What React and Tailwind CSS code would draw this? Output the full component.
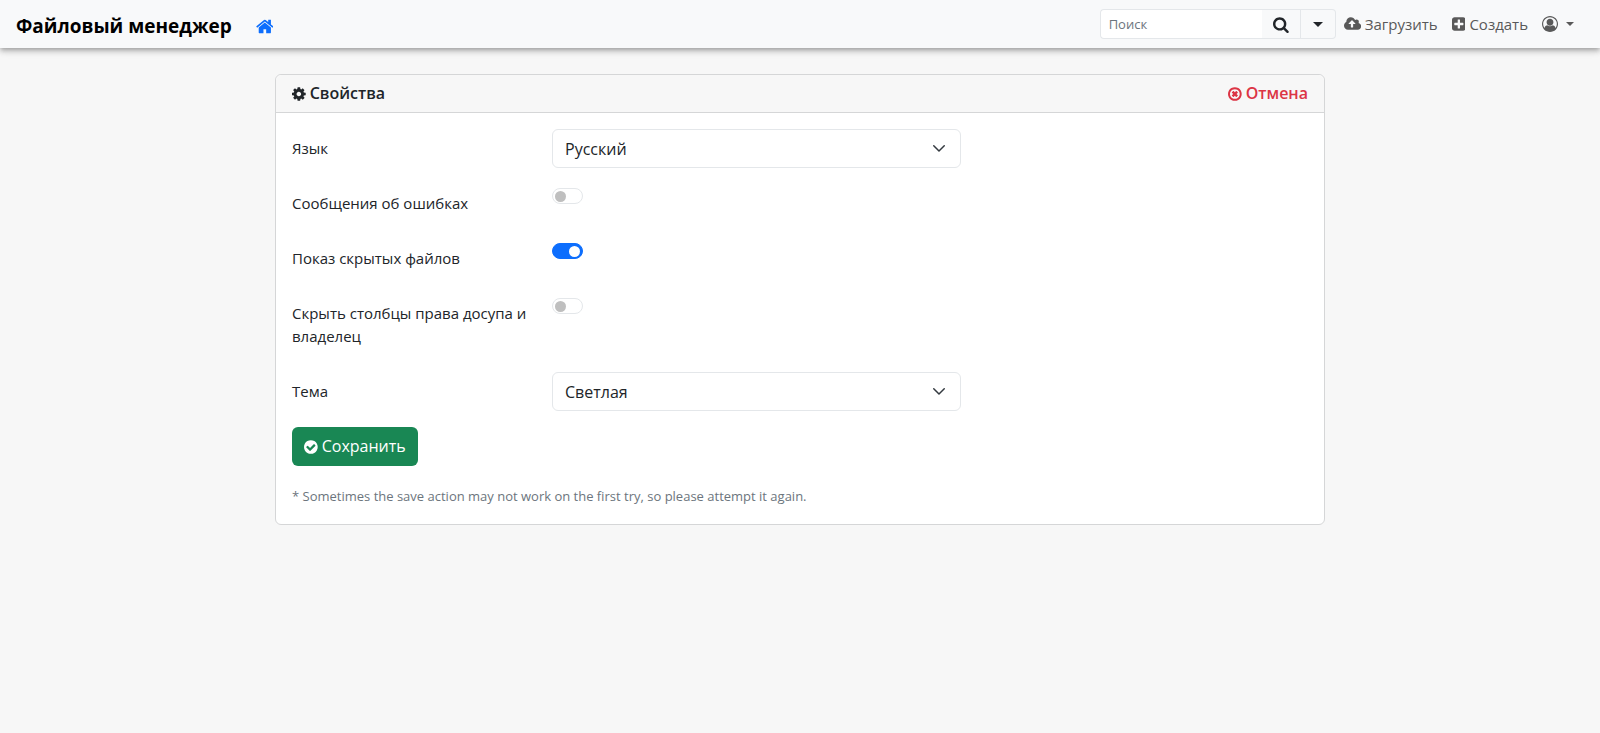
import React, { useState } from 'react';

const icons = {
    home: {
        box: '64 0 1664 1792',
        d: 'M1472 992v480q0 26-19 45t-45 19h-384v-384h-256v384h-384q-26 0-45-19t-19-45v-480q0-1 .5-3t.5-3l575-474 575 474q1 2 1 6zm223-69l-62 74q-8 9-21 11h-3q-13 0-21-7l-692-577-692 577q-12 8-24 7-13-2-21-11l-62-74q-8-10-7-23.5t11-21.5l719-599q32-26 76-26t76 26l244 204v-195q0-14 9-23t23-9h192q14 0 23 9t9 23v408l219 182q10 8 11 21.5t-7 23.5z',
    },
    search: {
        box: '64 0 1664 1792',
        d: 'M1216 832q0-185-131.5-316.5t-316.5-131.5-316.5 131.5-131.5 316.5 131.5 316.5 316.5 131.5 316.5-131.5 131.5-316.5zm512 832q0 52-38 90t-90 38q-54 0-90-38l-343-342q-179 124-399 124-143 0-273.5-55.5t-225-150-150-225-55.5-273.5 55.5-273.5 150-225 225-150 273.5-55.5 273.5 55.5 225 150 150 225 55.5 273.5q0 220-124 399l343 343q37 37 37 90z',
    },
    cog: {
        box: '128 0 1536 1792',
        d: 'M1152 896q0-106-75-181t-181-75-181 75-75 181 75 181 181 75 181-75 75-181zm512-109v222q0 12-8 23t-20 13l-185 28q-19 54-39 91 35 50 107 138 10 12 10 25t-9 23q-27 37-99 108t-94 71q-12 0-26-9l-138-108q-44 23-91 38-16 136-29 186-7 28-36 28h-222q-14 0-24.5-8.5t-11.5-21.5l-28-184q-49-16-90-37l-141 107q-10 9-25 9-14 0-25-11-126-114-165-168-7-10-7-23 0-12 8-23 15-21 51-66.5t54-70.5q-27-50-41-99l-183-27q-13-2-21-12.5t-8-23.5v-222q0-12 8-23t19-13l186-28q14-46 39-92-40-57-107-138-10-12-10-24 0-10 9-23 26-36 98.5-107.5t94.5-71.5q13 0 26 10l138 107q44-23 91-38 16-136 29-186 7-28 36-28h222q14 0 24.5 8.5t11.5 21.5l28 184q49 16 90 37l142-107q9-9 24-9 13 0 25 10 129 119 165 170 7 8 7 22 0 12-8 23-15 21-51 66.5t-54 70.5q26 50 41 98l183 28q13 2 21 12.5t8 23.5z',
    },
    cancel: {
        box: '128 0 1536 1792',
        d: 'M1225 1079l-146 146q-10 10-23 10t-23-10l-137-137-137 137q-10 10-23 10t-23-10l-146-146q-10-10-10-23t10-23l137-137-137-137q-10-10-10-23t10-23l146-146q10-10 23-10t23 10l137 137 137-137q10-10 23-10t23 10l146 146q10 10 10 23t-10 23l-137 137 137 137q10 10 10 23t-10 23zM1440 896q0-148-73-273t-198-198-273-73-273 73-198 198-73 273 73 273 198 198 273 73 273-73 198-198 73-273zm224 0q0 209-103 385.5t-279.5 279.5-385.5 103-385.5-103-279.5-279.5-103-385.5 103-385.5 279.5-279.5 385.5-103 385.5 103 279.5 279.5 103 385.5z',
    },
    check: {
        box: '128 0 1536 1792',
        d: 'M1412 734q0-28-18-46l-91-90q-19-19-45-19t-45 19l-408 407-226-226q-19-19-45-19t-45 19l-91 90q-18 18-18 46 0 27 18 45l362 362q19 19 45 19 27 0 46-19l543-543q18-18 18-45zm252 162q0 209-103 385.5t-279.5 279.5-385.5 103-385.5-103-279.5-279.5-103-385.5 103-385.5 279.5-279.5 385.5-103 385.5 103 279.5 279.5 103 385.5z',
    },
    plus: {
        box: '128 0 1536 1792',
        d: 'M1408 960v-128q0-26-19-45t-45-19h-320v-320q0-26-19-45t-45-19h-128q-26 0-45 19t-19 45v320h-320q-26 0-45 19t-19 45v128q0 26 19 45t45 19h320v320q0 26 19 45t45 19h128q26 0 45-19t19-45v-320h320q26 0 45-19t19-45zm256-544v960q0 119-84.5 203.5t-203.5 84.5h-960q-119 0-203.5-84.5t-84.5-203.5v-960q0-119 84.5-203.5t203.5-84.5h960q119 0 203.5 84.5t84.5 203.5z',
    },
    upload: {
        box: '0 0 1920 1792',
        d: 'M1280 864q0-14-9-23l-352-352q-9-9-23-9t-23 9l-351 351q-10 12-10 24 0 14 9 23t23 9h224v352q0 13 9.5 22.5t22.5 9.5h192q13 0 22.5-9.5t9.5-22.5v-352h224q13 0 22.5-9.5t9.5-22.5zm640 288q0 159-112.5 271.5t-271.5 112.5h-1088q-185 0-316.5-131.5t-131.5-316.5q0-130 70-240t188-165q-2-30-2-43 0-212 150-362t362-150q156 0 285.5 87t188.5 231q71-62 166-62 106 0 181 75t75 181q0 76-41 138 130 31 213.5 135.5t83.5 238.5z',
    },
    user: {
        box: '0 0 1792 1792',
        d: 'M896 0q182 0 348 71t286 191 191 286 71 348q0 181-70.5 347t-190.5 286-286 191.5-349 71.5-349-71-285.5-191.5-190.5-286-71-347.5 71-348 191-286 286-191 348-71zm619 1351q149-205 149-455 0-156-61-298t-164-245-245-164-298-61-298 61-245 164-164 245-61 298q0 250 149 455 66-327 306-327 131 128 313 128t313-128q240 0 306 327zm-235-647q0-159-112.5-271.5t-271.5-112.5-271.5 112.5-112.5 271.5 112.5 271.5 271.5 112.5 271.5-112.5 112.5-271.5z',
    },
};

const Icon = ({ name, className = 'h-4' }) => (
    <svg viewBox={icons[name].box} fill="currentColor" aria-hidden="true" className={`w-auto shrink-0 ${className}`}>
        <path d={icons[name].d} />
    </svg>
);

const Caret = ({ className }) => (
    <svg viewBox="0 0 10 5" fill="currentColor" aria-hidden="true" className={className}>
        <path d="M0 0h10L5 5z" />
    </svg>
);

const Navbar = () => {
    const [query, setQuery] = useState('');

    return (
        <nav className="flex h-12 items-center justify-between bg-[#f8f9fa] pl-4 pr-[26px] shadow-[0_4px_5px_0_rgba(0,0,0,0.14),0_1px_10px_0_rgba(0,0,0,0.12),0_2px_4px_-1px_rgba(0,0,0,0.2)]">
            <div className="flex items-center gap-6 pt-1">
                <a href="#" className="text-[19px] font-bold text-black">Файловый менеджер</a>
                <a href="#" aria-label="Home" className="text-[#0d6efd]">
                    <Icon name="home" className="h-[19px]" />
                </a>
            </div>

            <div className="flex items-center text-[#595959]">
                <form onSubmit={(e) => e.preventDefault()} className="mr-2 flex h-[30px] text-[#212529]">
                    <input
                        type="text"
                        placeholder="Поиск"
                        aria-label="Поиск"
                        value={query}
                        onChange={(e) => setQuery(e.target.value)}
                        className="w-[162px] rounded-l border border-r-0 border-[#e4e7ea] bg-white px-2 text-[13px] placeholder-[#6c757d] focus:outline-none"
                    />
                    <button type="submit" aria-label="Search" className="flex w-[39px] items-center justify-center border-y border-r border-[#e4e7ea]">
                        <Icon name="search" className="h-[17px]" />
                    </button>
                    <button type="button" aria-label="Search options" className="flex w-[35px] items-center justify-center rounded-r border border-l-0 border-[#e4e7ea]">
                        <Caret className="w-[10px]" />
                    </button>
                </form>
                <a href="#" className="flex items-center gap-1 pr-[14px]">
                    <Icon name="upload" />
                    Загрузить
                </a>
                <a href="#" className="flex items-center gap-1 pr-[14px]">
                    <Icon name="plus" />
                    Создать
                </a>
                <button type="button" aria-label="Account" className="flex items-center gap-2">
                    <Icon name="user" />
                    <Caret className="w-2" />
                </button>
            </div>
        </nav>
    );
};

const SelectRow = ({ id, label, options }) => (
    <div className="mb-4 grid grid-cols-12 gap-6">
        <label htmlFor={id} className="col-span-3 py-2">{label}</label>
        <div className="relative col-span-5">
            <select id={id} className="h-[39px] w-full appearance-none rounded-md border border-[#e4e7ea] bg-white pl-3 pr-9 text-base focus:outline-none">
                {options.map((option) => (
                    <option key={option}>{option}</option>
                ))}
            </select>
            <svg
                viewBox="0 0 16 16"
                fill="none"
                stroke="#343a40"
                strokeWidth="2"
                strokeLinecap="round"
                strokeLinejoin="round"
                aria-hidden="true"
                className="pointer-events-none absolute right-[14px] top-[13px] h-3 w-4"
            >
                <path d="m1 5 7 7 7-7" />
            </svg>
        </div>
    </div>
);

const SwitchRow = ({ id, label, defaultChecked }) => {
    const [checked, setChecked] = useState(defaultChecked);

    return (
        <div className="mb-4 grid grid-cols-12 gap-6">
            <label htmlFor={id} className="col-span-3 py-2">{label}</label>
            <div className="col-span-5 pt-1">
                <input
                    id={id}
                    type="checkbox"
                    role="switch"
                    checked={checked}
                    onChange={(e) => setChecked(e.target.checked)}
                    className="flex h-4 w-[31px] appearance-none items-center rounded-full border border-[#e4e7ea] bg-white px-[2px] before:h-[11px] before:w-[11px] before:rounded-full before:bg-[#bfbfbf] checked:justify-end checked:border-[#0d6efd] checked:bg-[#0d6efd] checked:before:bg-white"
                />
            </div>
        </div>
    );
};

const App = () => {
    return (
        <div className="min-h-screen bg-[#f7f7f7] font-['Open_Sans','Noto_Sans',sans-serif] text-[15px] leading-[23px] text-[#212529]">
            <Navbar />

            <main className="mx-auto mt-[26px] max-w-[1050px] rounded-md border border-[#d5d6d7] bg-white">
                <h6 className="flex items-center justify-between rounded-t-md border-b border-[#d5d6d7] bg-[#f7f7f7] px-4 py-[7px] text-base leading-[23px] font-semibold">
                    <span className="flex items-center gap-1">
                        <Icon name="cog" />
                        Свойства
                    </span>
                    <a href="#" className="flex items-center gap-1 text-[#dc3545]">
                        <Icon name="cancel" />
                        Отмена
                    </a>
                </h6>

                <form onSubmit={(e) => e.preventDefault()} className="p-4">
                    <SelectRow id="language" label="Язык" options={['Русский', 'English']} />
                    <SwitchRow id="errors" label="Сообщения об ошибках" defaultChecked={false} />
                    <SwitchRow id="hidden" label="Показ скрытых файлов" defaultChecked={true} />
                    <SwitchRow id="columns" label="Скрыть столбцы права досупа и владелец" defaultChecked={false} />
                    <SelectRow id="theme" label="Тема" options={['Светлая', 'Темная']} />

                    <button type="submit" className="flex items-center gap-1 rounded-md bg-[#198754] px-3 py-2 text-base leading-[23px] text-white">
                        <Icon name="check" />
                        Сохранить
                    </button>
                    <p className="mt-[19px] text-[13px] leading-[23px] text-[#6c757d]">
                        * Sometimes the save action may not work on the first try, so please attempt it again.
                    </p>
                </form>
            </main>
        </div>
    );
};

export default App;
